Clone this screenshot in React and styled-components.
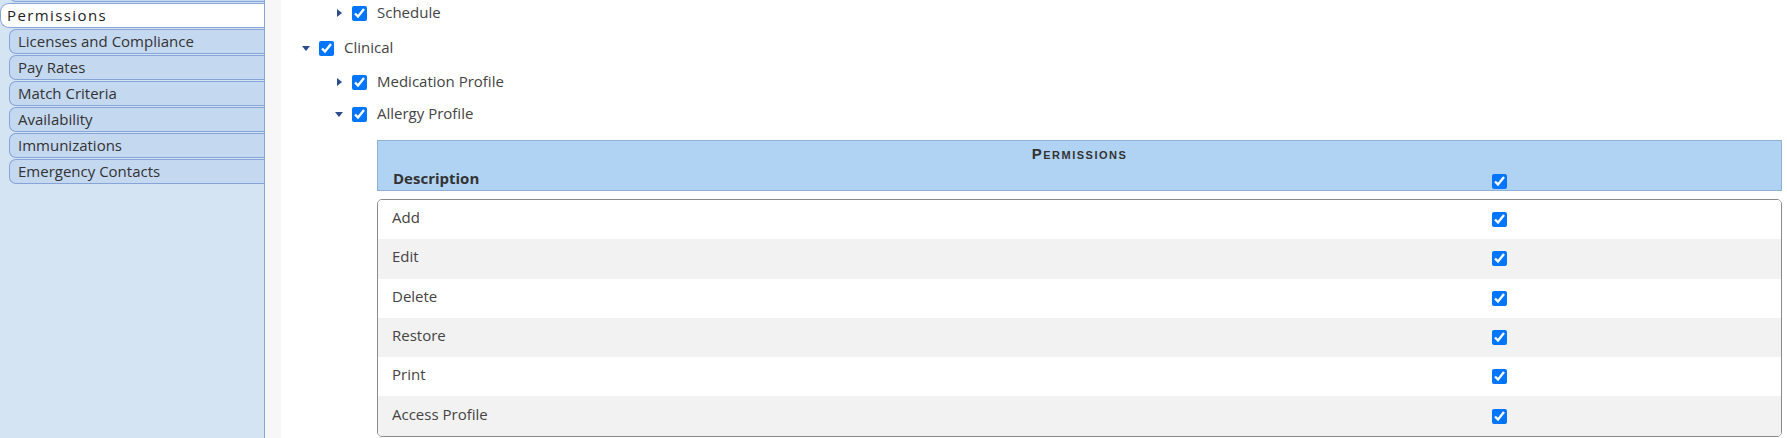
import React from 'react'
import styled, { createGlobalStyle } from 'styled-components'

const GlobalStyle = createGlobalStyle`
  html, body, #root {
    margin: 0;
    height: 100%;
  }
  body {
    font-family: 'Open Sans', 'Liberation Sans', sans-serif;
    color: #444;
    overflow: hidden;
  }
`

const Page = styled.div`
  display: flex;
  height: 100%;
`

const Sidebar = styled.nav`
  width: 264px;
  flex-shrink: 0;
  background: #d5e4f3;
  border-right: 1px solid #87a4d8;
  display: flex;
  flex-direction: column;
  gap: 1px;
  overflow: hidden;
`

const Tab = styled.div`
  height: 25px;
  box-sizing: border-box;
  display: flex;
  align-items: center;
  padding-bottom: 2px;
  font-size: 15px;
  color: #333;
  border: 1px solid #87a4d8;
  border-right: none;
  white-space: nowrap;
  ${(p) =>
    p.$active
      ? `
    margin-left: 0;
    margin-right: -1px;
    padding-left: 6px;
    background: #fff;
    border-radius: 9px 0 0 9px;
    letter-spacing: 1.4px;
    color: #222;
  `
      : `
    margin-left: 9px;
    padding-left: 8px;
    background: #c4d8f0;
    border-radius: 7px 0 0 7px;
  `}
  ${(p) => p.$peek && 'margin-top: -23px;'}
`

const Gutter = styled.div`
  width: 16px;
  flex-shrink: 0;
  background: #f7f7f7;
`

const Main = styled.main`
  flex: 1;
  background: #fff;
  padding: 0 5px 0 17px;
  overflow: hidden;
`

const Tree = styled.div`
  margin-top: -5px;
`

const Node = styled.div`
  margin-top: ${(p) => p.$gap || 0}px;
`

const Children = styled.div`
  padding-left: 33px;
  margin-top: 2px;
`

const Row = styled.div`
  display: flex;
  align-items: center;
  height: 32px;
  font-size: 15px;
  color: #444;
`

const Label = styled.span`
  padding-bottom: 2px;
`

const Toggle = styled.span`
  width: 16px;
  display: flex;
  justify-content: center;
  align-items: center;
  &::before {
    content: '';
    display: block;
    border-style: solid;
    border-color: transparent;
    ${(p) =>
      p.$open
        ? `
      border-width: 5px 4.5px 0 4.5px;
      border-top-color: #2b4d8c;
    `
        : `
      border-width: 4px 0 4px 5px;
      border-left-color: #2b4d8c;
    `}
  }
`

const Check = styled.input.attrs({ type: 'checkbox', defaultChecked: true })`
  width: 15px;
  height: 15px;
  margin: 0;
  accent-color: #0075ff;
`

const TreeCheck = styled(Check)`
  margin-left: 5px;
  margin-right: 10px;
`

const Detail = styled.div`
  margin-left: 46px;
  margin-top: 10px;
`

const Header = styled.div`
  background: #b1d3f3;
  border: 1px solid #8eb1d3;
`

const Title = styled.div`
  height: 21px;
  padding-top: 2px;
  line-height: 21px;
  text-align: center;
  font-family: 'Liberation Sans', Arial, sans-serif;
  font-weight: bold;
  font-size: 15px;
  font-variant: small-caps;
  letter-spacing: 1.5px;
  color: #333;
`

const Grid = styled.div`
  display: grid;
  grid-template-columns: 1fr 289px;
  align-items: ${(p) => p.$align || 'center'};
`

const HeadRow = styled(Grid)`
  height: 25px;
  padding-bottom: 1px;
`

const HeadLabel = styled.span`
  padding-left: 15px;
  font-weight: bold;
  font-size: 15px;
  line-height: 20px;
  padding-bottom: 1px;
  color: #333;
`

const Body = styled.div`
  margin-top: 8px;
  border: 1px solid #8a8a8a;
  border-radius: 5px;
  overflow: hidden;
`

const BodyRow = styled(Grid)`
  height: 39.3px;
  background: ${(p) => (p.$striped ? '#f2f2f2' : '#fff')};
  font-size: 15px;
  color: #444;
`

const Cell = styled.span`
  padding-left: 14px;
  padding-bottom: 5px;
`

const actions = ['Add', 'Edit', 'Delete', 'Restore', 'Print', 'Access Profile']
const tabs = ['Licenses and Compliance', 'Pay Rates', 'Match Criteria', 'Availability', 'Immunizations', 'Emergency Contacts']

const TreeItem = ({ label, open }) => (
  <Row>
    <Toggle $open={open} />
    <TreeCheck />
    <Label>{label}</Label>
  </Row>
)

export default function App() {
  return (
    <>
      <GlobalStyle />
      <Page>
        <Sidebar>
          <Tab $peek />
          <Tab $active>Permissions</Tab>
          {tabs.map((t) => (
            <Tab key={t}>{t}</Tab>
          ))}
        </Sidebar>
        <Gutter />
        <Main>
          <Tree>
            <Children>
              <TreeItem label="Schedule" />
            </Children>
            <Node $gap={3}>
              <TreeItem label="Clinical" open />
              <Children>
                <TreeItem label="Medication Profile" />
                <Node>
                  <TreeItem label="Allergy Profile" open />
                  <Detail>
                    <Header>
                      <Title>Permissions</Title>
                      <HeadRow $align="end">
                        <HeadLabel>Description</HeadLabel>
                        <Check />
                      </HeadRow>
                    </Header>
                    <Body>
                      {actions.map((a, i) => (
                        <BodyRow key={a} $striped={i % 2 === 1}>
                          <Cell>{a}</Cell>
                          <Check />
                        </BodyRow>
                      ))}
                    </Body>
                  </Detail>
                </Node>
              </Children>
            </Node>
          </Tree>
        </Main>
      </Page>
    </>
  )
}
